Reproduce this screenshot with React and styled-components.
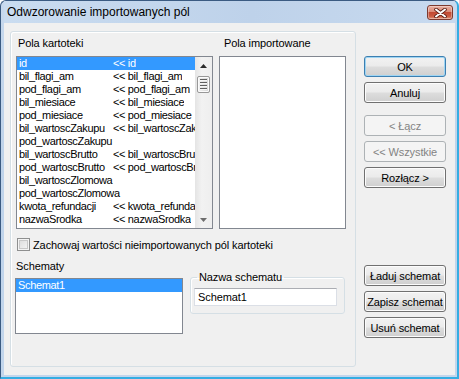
import React from 'react';
import styled, { createGlobalStyle, css } from 'styled-components';

const GlobalStyle = createGlobalStyle`
  html, body {
    margin: 0;
    padding: 0;
    background: #ffffff;
  }
  body {
    font-family: "Liberation Sans", Arial, sans-serif;
    font-size: 11px;
    letter-spacing: -0.1px;
    color: #000;
  }
`;

const Window = styled.div`
  width: 459px;
  height: 379px;
  box-sizing: border-box;
  display: flex;
  flex-direction: column;
  background: linear-gradient(to bottom, #c7d9ee, #bfd3ea 40%, #c3d6ec);
  border: 1px solid #3b5b82;
  border-right: 2px solid #35ade2;
  border-bottom: 2px solid #35ade2;
  border-radius: 6px 6px 0 0;
  padding: 0 2px 2px 3px;
  overflow: hidden;
`;

const TitleBar = styled.div`
  height: 22px;
  flex-shrink: 0;
  display: flex;
  justify-content: space-between;
  align-items: flex-start;
  padding-left: 3px;
  background: linear-gradient(to right, #cadcf0 0%, #bed2ea 55%, #c8daef 100%);
`;

const Title = styled.div`
  font-size: 12px;
  letter-spacing: 0;
  line-height: 22px;
  color: #000;
`;

const CloseButton = styled.div`
  width: 26px;
  height: 15px;
  box-sizing: border-box;
  margin: 4px 2px 0 0;
  border: 1px solid #7d3a2f;
  border-radius: 3px;
  background: linear-gradient(to bottom, #e9b0a3 0%, #db8a76 45%, #c24a33 50%, #cb5a40 78%, #e0957a 100%);
  box-shadow: inset 0 0 0 1px rgba(255, 255, 255, 0.35);
  display: flex;
  align-items: center;
  justify-content: center;
`;

const Client = styled.div`
  flex: 1;
  display: flex;
  gap: 8px;
  padding: 8px 9px 0 6px;
  background: #f0f0f0;
`;

const Group = styled.div`
  width: 346px;
  height: 336px;
  box-sizing: border-box;
  border: 1px solid #d5dfe5;
  border-radius: 3px;
  box-shadow: inset 1px 1px 0 #ffffff;
  padding: 5px 0 0 5px;
  display: flex;
  flex-direction: column;
`;

const TopRow = styled.div`
  display: flex;
  gap: 6px;
`;

const Column = styled.div`
  display: flex;
  flex-direction: column;
`;

const Label = styled.div`
  line-height: 13px;
  height: 13px;
  padding-left: ${p => p.$indent || 0}px;
  margin-bottom: ${p => p.$after || 6}px;
  white-space: nowrap;
`;

const ListBox = styled.div`
  width: ${p => p.$w}px;
  height: ${p => p.$h}px;
  box-sizing: border-box;
  margin-left: ${p => p.$shift || 0}px;
  border: 1px solid #828790;
  background: #ffffff;
  display: flex;
  overflow: hidden;
`;

const Items = styled.div`
  flex: 1;
  min-width: 0;
  overflow: hidden;
`;

const Row = styled.div`
  display: flex;
  height: 13px;
  line-height: 13px;
  padding-left: 2px;
  letter-spacing: -0.35px;
  white-space: nowrap;
  overflow: hidden;
  ${p => p.$selected && css`
    background: #3399ff;
    color: #ffffff;
  `}
`;

const NameCell = styled.span`
  flex-shrink: 0;
  width: ${p => (p.$alone ? 'auto' : '94px')};
`;

const MappedCell = styled.span`
  overflow: hidden;
`;

const ScrollBar = styled.div`
  width: 17px;
  flex-shrink: 0;
  display: flex;
  flex-direction: column;
  background: linear-gradient(to right, #e4e4e4, #f2f2f2 40%, #eeeeee);
`;

const ArrowButton = styled.div`
  height: 17px;
  flex-shrink: 0;
  display: flex;
  align-items: center;
  justify-content: center;
`;

const Track = styled.div`
  flex: 1;
  padding: 2px 2px 0 2px;
`;

const Thumb = styled.div`
  height: 17px;
  box-sizing: border-box;
  border: 1px solid #989898;
  border-radius: 2px;
  background: linear-gradient(to right, #f4f4f4, #e4e4e4 50%, #d6d6d6);
  box-shadow: inset 0 0 0 1px #fbfbfb;
  display: flex;
  flex-direction: column;
  align-items: center;
  justify-content: center;
  gap: 1px;
`;

const Grip = styled.div`
  width: 7px;
  height: 1px;
  background: #5f5f5f;
  border-bottom: 1px solid #f4f4f4;
`;

const CheckRow = styled.div`
  margin-top: 8px;
  height: 15px;
  display: flex;
  align-items: center;
  gap: 3px;
  padding-left: 1px;
  white-space: nowrap;
`;

const CheckBox = styled.div`
  width: 13px;
  height: 13px;
  box-sizing: border-box;
  border: 1px solid #8e8f8f;
  background: linear-gradient(135deg, #d9d9d9, #f8f8f8);
  box-shadow: inset 0 0 0 1px #f4f4f4, inset 0 0 0 2px #c8c8c8;
`;

const BottomRow = styled.div`
  margin-top: 8px;
  display: flex;
  align-items: flex-start;
  gap: 7px;
`;

const Fieldset = styled.fieldset`
  margin: 11px 0 0 0;
  width: 155px;
  height: 43px;
  min-width: 0;
  box-sizing: border-box;
  border: 1px solid #d5dfe5;
  border-radius: 3px;
  box-shadow: inset 1px 1px 0 #ffffff;
  padding: 4px 3px 0 3px;
`;

const Legend = styled.legend`
  padding: 0 2px;
  margin-left: 3px;
  line-height: 13px;
  font-size: 11px;
`;

const TextInput = styled.div`
  width: 143px;
  height: 18px;
  box-sizing: border-box;
  border: 1px solid #dbdfe6;
  border-top-color: #abadb3;
  background: #ffffff;
  padding-left: 3px;
  line-height: 16px;
`;

const ButtonColumn = styled.div`
  width: 82px;
  display: flex;
  flex-direction: column;
`;

const ButtonGroup = styled.div`
  display: flex;
  flex-direction: column;
  gap: 5px;
  margin-top: ${p => p.$top}px;
`;

const Button = styled.button`
  height: 21px;
  width: 82px;
  box-sizing: border-box;
  padding: 0;
  border: 1px solid #707070;
  border-radius: 3px;
  background: linear-gradient(to bottom, #f2f2f2 0%, #ebebeb 48%, #dddddd 52%, #cfcfcf 100%);
  box-shadow: inset 0 0 0 1px #fcfcfc;
  font-family: "Liberation Sans", Arial, sans-serif;
  font-size: 11px;
  letter-spacing: -0.1px;
  color: #000;
  white-space: nowrap;
  ${p => p.$primary && css`
    border-color: #3c7fb1;
    box-shadow: inset 0 0 0 1px #9fd5f3;
  `}
  &:disabled {
    border-color: #adb2b5;
    background: #f4f4f4;
    box-shadow: none;
    color: #838383;
  }
`;

const fields = [
  ['id', '<< id'],
  ['bil_flagi_am', '<< bil_flagi_am'],
  ['pod_flagi_am', '<< pod_flagi_am'],
  ['bil_miesiace', '<< bil_miesiace'],
  ['pod_miesiace', '<< pod_miesiace'],
  ['bil_wartoscZakupu', '<< bil_wartoscZakupu'],
  ['pod_wartoscZakupu', ''],
  ['bil_wartoscBrutto', '<< bil_wartoscBrutto'],
  ['pod_wartoscBrutto', '<< pod_wartoscBrutto'],
  ['bil_wartoscZlomowa', ''],
  ['pod_wartoscZlomowa', ''],
  ['kwota_refundacji', '<< kwota_refundacji'],
  ['nazwaSrodka', '<< nazwaSrodka'],
];

function Arrow({ down, color }) {
  return (
    <svg width="7" height="4" viewBox="0 0 7 4">
      <path d={down ? 'M0 0H7L3.5 4Z' : 'M0 4H7L3.5 0Z'} fill={color} />
    </svg>
  );
}

function App() {
  return (
    <>
      <GlobalStyle />
      <Window>
        <TitleBar>
          <Title>Odwzorowanie importowanych pól</Title>
          <CloseButton>
            <svg width="13" height="10" viewBox="0 0 13 10">
              <path d="M2 1.5L11 8.5M11 1.5L2 8.5" stroke="#5a1d14" strokeWidth="3.6" strokeLinecap="round" />
              <path d="M2 1.5L11 8.5M11 1.5L2 8.5" stroke="#ffffff" strokeWidth="2" strokeLinecap="round" />
            </svg>
          </CloseButton>
        </TitleBar>
        <Client>
          <Group>
            <TopRow>
              <Column>
                <Label $indent={2}>Pola kartoteki</Label>
                <ListBox $w={197} $h={173}>
                  <Items>
                    {fields.map(([name, mapped], i) => (
                      <Row key={name} $selected={i === 0}>
                        <NameCell $alone={!mapped}>{name}</NameCell>
                        {mapped && <MappedCell>{mapped}</MappedCell>}
                      </Row>
                    ))}
                  </Items>
                  <ScrollBar>
                    <ArrowButton><Arrow color="#2b2b2b" /></ArrowButton>
                    <Track><Thumb><Grip /><Grip /><Grip /><Grip /></Thumb></Track>
                    <ArrowButton><Arrow down color="#6d6d6d" /></ArrowButton>
                  </ScrollBar>
                </ListBox>
              </Column>
              <Column>
                <Label $indent={5}>Pola importowane</Label>
                <ListBox $w={127} $h={173} />
              </Column>
            </TopRow>
            <CheckRow>
              <CheckBox />
              <span>Zachowaj wartości nieimportowanych pól kartoteki</span>
            </CheckRow>
            <BottomRow>
              <Column>
                <Label $after={5}>Schematy</Label>
                <ListBox $w={168} $h={56} $shift={-1}>
                  <Items>
                    <Row $selected>
                      <NameCell $alone>Schemat1</NameCell>
                    </Row>
                  </Items>
                </ListBox>
              </Column>
              <Fieldset>
                <Legend>Nazwa schematu</Legend>
                <TextInput>Schemat1</TextInput>
              </Fieldset>
            </BottomRow>
          </Group>
          <ButtonColumn>
            <ButtonGroup $top={25}>
              <Button $primary>OK</Button>
              <Button>Anuluj</Button>
            </ButtonGroup>
            <ButtonGroup $top={12}>
              <Button disabled>&lt; Łącz</Button>
              <Button disabled>&lt;&lt; Wszystkie</Button>
              <Button>Rozłącz &gt;</Button>
            </ButtonGroup>
            <ButtonGroup $top={77}>
              <Button>Ładuj schemat</Button>
              <Button>Zapisz schemat</Button>
              <Button>Usuń schemat</Button>
            </ButtonGroup>
          </ButtonColumn>
        </Client>
      </Window>
    </>
  );
}

export default App;
